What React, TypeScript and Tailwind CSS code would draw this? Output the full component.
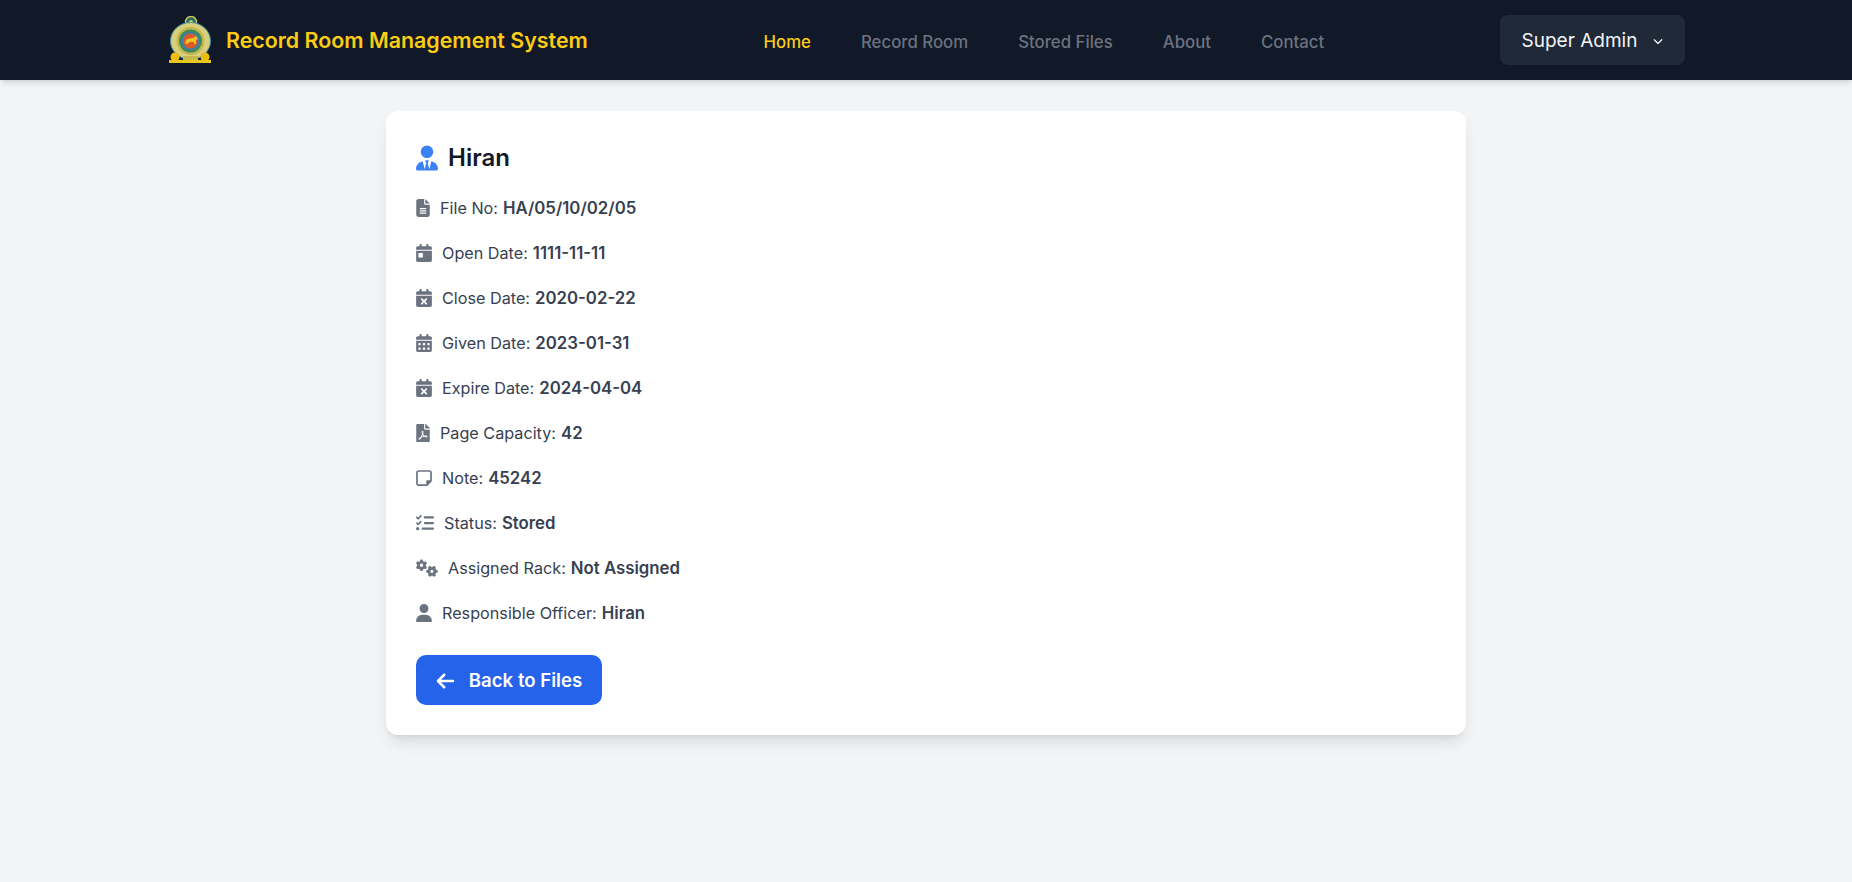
import { FaFilePdf } from 'react-icons/fa';
import { FaArrowLeft, FaCalendarDay, FaCalendarDays, FaCalendarXmark, FaChevronDown, FaFileLines, FaGears, FaListCheck, FaRegNoteSticky, FaUser, FaUserTie } from 'react-icons/fa6';

const details = [
  { icon: FaFileLines, size: 'w-[14px]', label: 'File No:', value: 'HA/05/10/02/05' },
  { icon: FaCalendarDay, size: 'w-4', label: 'Open Date:', value: '1111-11-11' },
  { icon: FaCalendarXmark, size: 'w-4', label: 'Close Date:', value: '2020-02-22' },
  { icon: FaCalendarDays, size: 'w-4', label: 'Given Date:', value: '2023-01-31' },
  { icon: FaCalendarXmark, size: 'w-4', label: 'Expire Date:', value: '2024-04-04' },
  { icon: FaFilePdf, size: 'w-[14px]', label: 'Page Capacity:', value: '42' },
  { icon: FaRegNoteSticky, size: 'w-4', label: 'Note:', value: '45242' },
  { icon: FaListCheck, size: 'w-[18px]', label: 'Status:', value: 'Stored' },
  { icon: FaGears, size: 'w-[22px]', label: 'Assigned Rack:', value: 'Not Assigned' },
  { icon: FaUser, size: 'w-4', label: 'Responsible Officer:', value: 'Hiran' },
];

const links = ['Home', 'Record Room', 'Stored Files', 'About', 'Contact'];

function Emblem() {
  return (
    <svg width="44" height="48" viewBox="0 0 44 48" className="shrink-0">
      <circle cx="23" cy="6" r="5.5" fill="#1d6f6c" stroke="#cdbb55" strokeWidth="1.5" />
      <circle cx="23" cy="6" r="2" fill="#d9c94f" />
      <ellipse cx="22.5" cy="25" rx="20" ry="18.5" fill="#d8cf7c" stroke="#3f93a8" strokeWidth="1" />
      <circle cx="22.5" cy="25" r="14" fill="#c2b84a" />
      <circle cx="22.5" cy="25" r="11.5" fill="#3f8a5c" />
      <circle cx="22.5" cy="25" r="9" fill="#3c7fb5" />
      <circle cx="22.5" cy="25" r="7.5" fill="#dc5a28" />
      <path d="M17 27l2-4 6-1 3-2 2 3-2 1v4h-2v-2h-5l-1 2h-2z" fill="#f3c321" />
      <rect x="15" y="40" width="15" height="5" fill="#c9b84a" />
      <circle cx="7" cy="41" r="4.5" fill="#f0bc0d" />
      <circle cx="37" cy="41" r="4.5" fill="#f0bc0d" />
      <rect x="1" y="44" width="42" height="3" fill="#e8c81e" />
    </svg>
  );
}

export default function App() {
  return (
    <div className="min-h-[882px] bg-[#f3f4f6] font-['Inter','Noto_Sans',sans-serif]">
      <header className="h-20 bg-[#111827] shadow-md">
        <div className="mx-auto flex h-full w-[1536px] items-center justify-between pl-[10px] pr-[9px]">
          <div className="flex items-center gap-[14px]">
            <Emblem />
            <span className="text-[21.4px] font-semibold text-[#facc15]">Record Room Management System</span>
          </div>
          <nav className="flex items-center gap-[50px] pt-[5px]">
            {links.map((link, i) => (
              <a key={link} className={i === 0 ? 'text-[16.8px] font-medium text-[#facc15]' : 'text-[16.8px] font-medium text-[#6b7280]'}>
                {link}
              </a>
            ))}
          </nav>
          <button className="flex h-[50px] w-[185px] items-center justify-center gap-[16px] rounded-lg bg-[#1f2937] pt-[2px] text-[19px] text-[#f3f4f6]">
            Super Admin
            <FaChevronDown className="h-[10px] w-[10px]" />
          </button>
        </div>
      </header>
      <main className="mx-auto mt-[31px] w-[1080px] rounded-xl bg-white p-[30px] shadow-lg">
        <h1 className="flex items-center gap-[10px] pt-[1px] text-2xl font-semibold text-[#111827]">
          <FaUserTie className="h-[26px] w-[22px] text-[#3b82f6]" />
          Hiran
        </h1>
        <ul className="mt-[12px]">
          {details.map(({ icon: Icon, size, label, value }) => (
            <li key={label + value} className="flex h-[45px] items-center text-[16.2px] text-[#374151]">
              <Icon className={`mb-[2px] mr-[10px] h-[18px] ${size} text-[#6b7280]`} />
              <span>{label}</span>
              <b className="ml-[5px] text-[16.8px] font-semibold">{value}</b>
            </li>
          ))}
        </ul>
        <button className="mt-[19px] flex h-[50px] w-[186px] items-center justify-center gap-[14px] rounded-[10px] bg-[#2563eb] pt-px text-[18.6px] font-semibold text-white">
          <FaArrowLeft className="h-[20px] w-[19px]" />
          Back to Files
        </button>
      </main>
    </div>
  );
}
